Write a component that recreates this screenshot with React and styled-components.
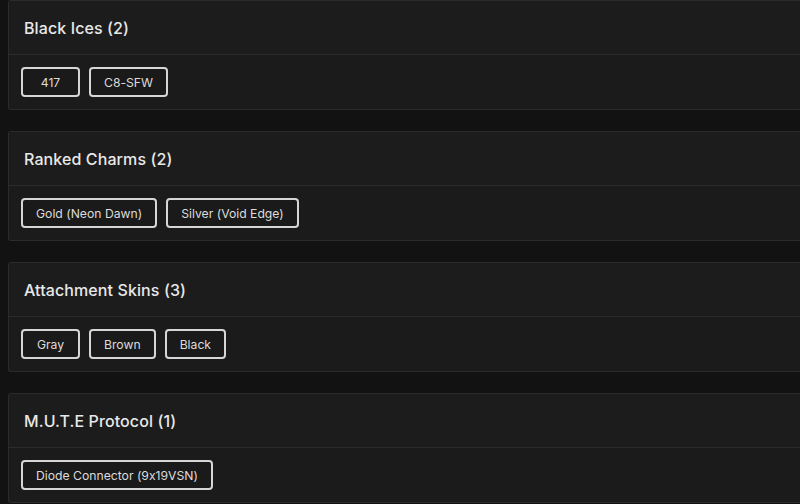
import styled, { createGlobalStyle } from "styled-components";

const Global = createGlobalStyle`
  html, body {
    margin: 0;
    background: #121212;
    overflow: hidden;
  }
  body {
    font-family: Inter, "Noto Sans", sans-serif;
    font-feature-settings: "calt" 0;
  }
`;

const Page = styled.div`
  padding: 0 0 0 8px;
  display: flex;
  flex-direction: column;
  gap: 21px;
`;

/* cards run off the right side of the view, so no right border */
const Card = styled.section`
  background: #1b1b1b;
  border: 1px solid #2b2b2b;
  border-right: none;
  border-radius: 3px 0 0 3px;
  height: 110px;
  box-sizing: border-box;
  display: flex;
  flex-direction: column;
`;

const Header = styled.div`
  height: 54px;
  box-sizing: border-box;
  padding: 0 15px;
  display: flex;
  align-items: center;
  border-bottom: 1px solid #2b2b2b;
  background: #1c1c1c;
`;

const Title = styled.h3`
  margin: 0;
  font-size: 16px;
  font-weight: 500;
  color: #e8e8e8;
  letter-spacing: 0.1px;
`;

const Body = styled.div`
  flex: 1;
  padding: 0 12px;
  display: flex;
  align-items: center;
  gap: 9px;
`;

const Chip = styled.span`
  min-width: 59px;
  height: 30px;
  box-sizing: border-box;
  padding: 0 13px;
  display: inline-flex;
  align-items: center;
  justify-content: center;
  border: 2px solid #d6d6d6;
  border-radius: 4px;
  background: #1a1a1a;
  color: #dcdcdc;
  font-size: 12.2px;
  white-space: nowrap;
`;

const groups = [
  { name: "Black Ices", items: ["417", "C8-SFW"] },
  { name: "Ranked Charms", items: ["Gold (Neon Dawn)", "Silver (Void Edge)"] },
  { name: "Attachment Skins", items: ["Gray", "Brown", "Black"] },
  { name: "M.U.T.E Protocol", items: ["Diode Connector (9x19VSN)"] },
];

export default function App() {
  return (
    <>
      <Global />
      <Page>
        {groups.map((g) => (
          <Card key={g.name}>
            <Header>
              <Title>
                {g.name} ({g.items.length})
              </Title>
            </Header>
            <Body>
              {g.items.map((it) => (
                <Chip key={it}>{it}</Chip>
              ))}
            </Body>
          </Card>
        ))}
      </Page>
    </>
  );
}
